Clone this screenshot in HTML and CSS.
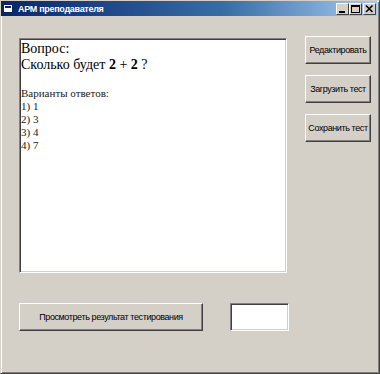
FILE: index.html
```html
<!DOCTYPE html>
<html lang="ru">
<head>
    <meta charset="UTF-8">
    <title>АРМ преподавателя</title>
    <link rel="stylesheet" href="styles.css">
</head>
<body>
    <div class="window">
        <div class="titlebar">
            <div class="title">
                <svg class="app-icon" width="9" height="9" viewBox="0 0 9 9">
                    <rect x="0" y="1" width="8" height="7" fill="#fff"/>
                    <rect x="1" y="2" width="6" height="2" fill="#0a246a"/>
                </svg>
                <span>АРМ преподавателя</span>
            </div>
            <div class="controls">
                <span class="ctl">
                    <svg width="11" height="10" viewBox="0 0 11 10"><rect x="2" y="7" width="6" height="2" fill="#000"/></svg>
                </span>
                <span class="ctl">
                    <svg width="11" height="10" viewBox="0 0 11 10"><rect x="1.5" y="1.5" width="8" height="7" fill="none" stroke="#000"/><rect x="1" y="1" width="9" height="2" fill="#000"/></svg>
                </span>
                <span class="ctl close">
                    <svg width="11" height="10" viewBox="0 0 11 10"><path d="M2 1.5 L8.5 8 M8.5 1.5 L2 8" stroke="#000" stroke-width="1.6"/></svg>
                </span>
            </div>
        </div>
        <div class="client">
            <div class="top-row">
                <div class="question-box">
                    <p class="q-label">Вопрос:</p>
                    <p class="q-text">Сколько будет <b>2</b> + <b>2</b> ?</p>
                    <p class="answers-title">Варианты ответов:</p>
                    <p class="answer">1) 1</p>
                    <p class="answer">2) 3</p>
                    <p class="answer">3) 4</p>
                    <p class="answer">4) 7</p>
                </div>
                <div class="side-buttons">
                    <button class="button">Редактировать</button>
                    <button class="button">Загрузить тест</button>
                    <button class="button">Сохранить тест</button>
                </div>
            </div>
            <div class="bottom-row">
                <button class="button result-button">Просмотреть результат тестирования</button>
                <div class="result-field"></div>
            </div>
        </div>
    </div>
</body>
</html>
```

FILE: styles.css
```css
body {
    margin: 0;
    padding: 0;
    background-color: #d4d0c8;
    font-family: "Liberation Sans", Arial, sans-serif;
}
.window {
    width: 380px;
    height: 374px;
    box-sizing: border-box;
    background-color: #d4d0c8;
    border: 1px solid;
    border-color: #d4d0c8 #404040 #404040 #d4d0c8;
    box-shadow: inset 1px 1px #fff, inset -1px -1px #808080;
    padding: 0 2px 0 0;
}
.titlebar {
    height: 15px;
    display: flex;
    align-items: center;
    justify-content: space-between;
    background: linear-gradient(to right, #0a246a, #3a6ea5 60%, #a6caf0);
    color: white;
}
.title {
    display: flex;
    align-items: center;
    gap: 5px;
    padding-left: 3px;
    font-size: 9px;
    font-weight: bold;
    letter-spacing: -0.3px;
}
.controls {
    display: flex;
    padding-right: 1px;
}
.ctl {
    width: 11px;
    height: 10px;
    background-color: #d4d0c8;
    border: 1px solid;
    border-color: #fff #404040 #404040 #fff;
    display: flex;
}
.ctl.close {
    margin-left: 1px;
}
.client {
    padding: 22px 0 0 18px;
}
.top-row {
    display: flex;
}
.question-box {
    width: 268px;
    height: 235px;
    box-sizing: border-box;
    background-color: white;
    border: 1px solid;
    border-color: #808080 #fff #fff #808080;
    box-shadow: inset 1px 1px #404040, inset -1px -1px #d4d0c8;
    padding: 2px 0 0 1px;
    font-family: "Liberation Serif", "Times New Roman", serif;
    color: #000;
}
.question-box p {
    margin: 0;
}
.q-label, .q-text {
    font-size: 14px;
    line-height: 16px;
}
.answers-title {
    margin-top: 14px !important;
    font-size: 11px;
    line-height: 13px;
    color: #222;
}
.answer {
    font-size: 11px;
    line-height: 13px;
    color: #222;
}
.side-buttons {
    margin-left: 18px;
    margin-top: -2px;
    display: flex;
    flex-direction: column;
    gap: 11px;
}
.button {
    width: 66px;
    height: 28px;
    padding: 0;
    background-color: #d4d0c8;
    border: 1px solid;
    border-color: #fff #404040 #404040 #fff;
    box-shadow: inset -1px -1px #808080;
    font-family: "Liberation Sans", Arial, sans-serif;
    font-size: 9px;
    letter-spacing: -0.4px;
    color: #000;
    cursor: pointer;
    white-space: nowrap;
}
.bottom-row {
    display: flex;
    gap: 27px;
    margin-top: 30px;
}
.result-button {
    width: 184px;
}
.result-field {
    width: 59px;
    height: 28px;
    box-sizing: border-box;
    background-color: white;
    border: 1px solid;
    border-color: #808080 #fff #fff #808080;
    box-shadow: inset 1px 1px #404040, inset -1px -1px #d4d0c8;
}
```
